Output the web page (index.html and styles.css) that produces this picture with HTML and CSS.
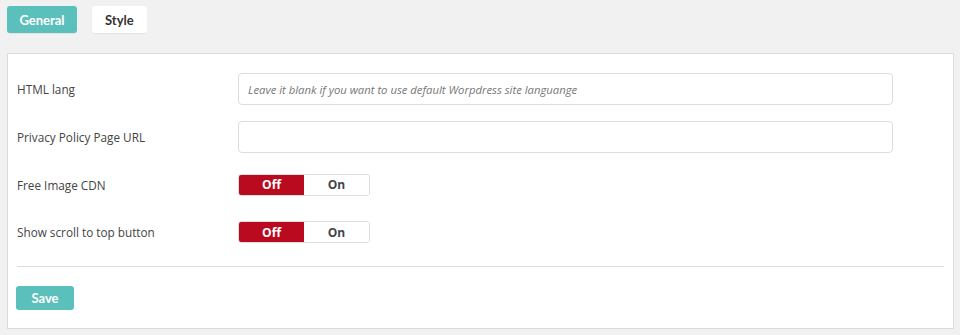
FILE: index.html
```html
<!DOCTYPE html>
<html>
<head>
<meta charset="utf-8">
<link rel="stylesheet" href="styles.css">
</head>
<body>
<div class="tabs">
  <button class="tab tab-active">General</button>
  <button class="tab">Style</button>
</div>
<div class="panel">
  <div class="rows">
    <div class="row">
      <label class="label">HTML lang</label>
      <input class="field" type="text" placeholder="Leave it blank if you want to use default Worpdress site languange">
    </div>
    <div class="row">
      <label class="label">Privacy Policy Page URL</label>
      <input class="field" type="text">
    </div>
    <div class="row">
      <label class="label">Free Image CDN</label>
      <div class="toggle"><span class="opt opt-on">Off</span><span class="opt">On</span></div>
    </div>
    <div class="row">
      <label class="label">Show scroll to top button</label>
      <div class="toggle"><span class="opt opt-on">Off</span><span class="opt">On</span></div>
    </div>
  </div>
  <div class="divider"></div>
  <button class="save">Save</button>
</div>
</body>
</html>
```
FILE: styles.css
```css
html, body {
  margin: 0;
  background: #f1f1f1;
}
body {
  padding: 6px 6px 0 7px;
  font-family: "Open Sans", "Noto Sans", sans-serif;
  color: #444;
}
.tabs {
  display: flex;
  gap: 15px;
  height: 27px;
}
.tab {
  font-family: Lato, sans-serif;
  font-weight: 700;
  font-size: 13px;
  color: #333;
  background: #fff;
  border: 0;
  border-radius: 3px;
  padding: 0 13px;
  height: 27px;
  box-shadow: 0 1px 1px rgba(0,0,0,0.06);
}
.tab-active {
  background: #5bbfbb;
  color: #fff;
  padding: 0 12px;
  width: 70px;
}
.panel {
  margin-top: 20px;
  width: 947px;
  box-sizing: border-box;
  background: #fff;
  border: 1px solid #dcdcdc;
  padding: 11px 9px 18px 9px;
}
.rows {
  display: grid;
  grid-template-rows: 48px 48px 47px 48px;
}
.row {
  display: flex;
  align-items: center;
}
.label {
  width: 221px;
  font-size: 11.75px;
  color: #444;
}
.field {
  width: 655px;
  height: 32px;
  box-sizing: border-box;
  border: 1px solid #ddd;
  border-radius: 4px;
  padding: 0 9px;
  font-family: "Open Sans", sans-serif;
  font-size: 11.3px;
  outline: none;
}
.field::placeholder {
  font-style: italic;
  color: #777;
}
.toggle {
  display: flex;
  width: 132px;
  height: 22px;
  box-sizing: border-box;
  border: 1px solid #ddd;
  border-radius: 3px;
  overflow: hidden;
}
.opt {
  flex: 1;
  display: flex;
  align-items: center;
  justify-content: center;
  font-family: "Open Sans", sans-serif;
  font-weight: 700;
  font-size: 12px;
  color: #444;
  background: #fff;
}
.opt-on {
  background: #b90a1f;
  color: #fff;
}
.divider {
  margin-top: 10px;
  height: 1px;
  background: #ddd;
}
.save {
  margin-top: 19px;
  margin-left: -1px;
  width: 58px;
  height: 24px;
  border: 0;
  border-radius: 3px;
  background: #5bbfbb;
  color: #fff;
  font-family: Lato, sans-serif;
  font-weight: 700;
  font-size: 13px;
  padding: 0;
  display: block;
}
```
